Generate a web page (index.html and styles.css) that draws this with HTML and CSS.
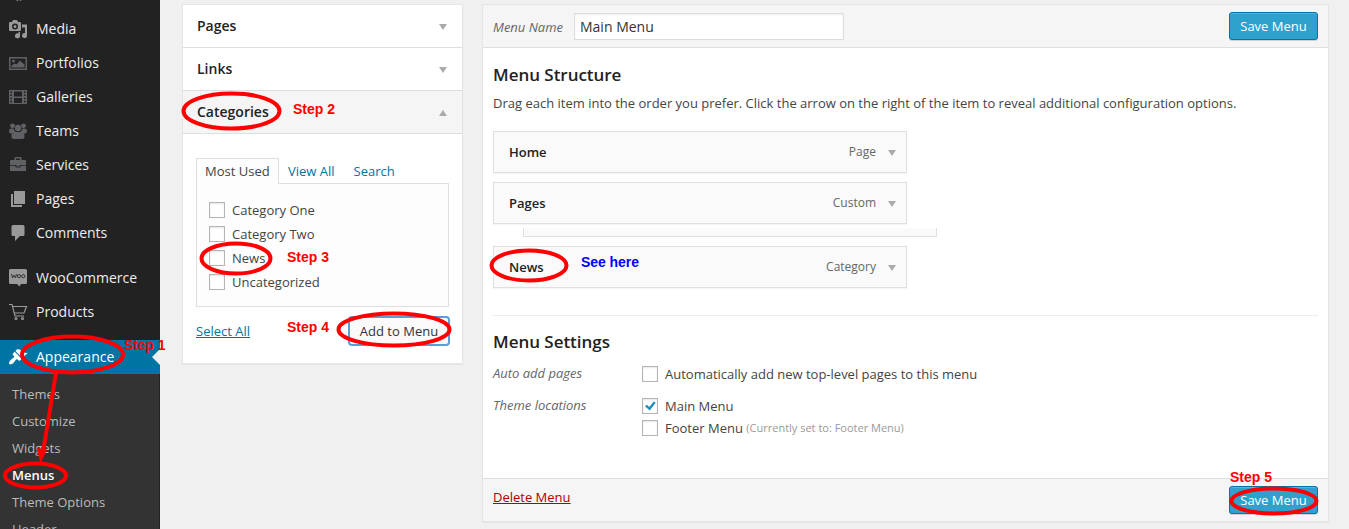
FILE: index.html
```html
<!DOCTYPE html>
<html lang="en">
<head>
<meta charset="utf-8">
<title>Menus</title>
<link rel="stylesheet" href="styles.css">
</head>
<body>
<div class="app">
  <nav class="sidebar">
    <div class="nav-cut"><svg viewBox="0 0 20 12"><path d="M8 -1l2 2M12.500 -1v2" stroke="#777" stroke-width="1.500"/></svg></div>
    <a class="nav-item"><svg class="icon light" viewBox="0 0 20 20"><path fill-rule="evenodd" d="M2 3h2l1-2h4l1 2h2q1 0 1 1v7q0 1-1 1H2q-1 0-1-1V4q0-1 1-1zM7 4.500a3 3 0 1 0 0 6a3 3 0 0 0 0-6zM7 6a1.500 1.500 0 1 1 0 3a1.500 1.500 0 0 1 0-3z"/><path d="M14 5.500h5v11a2.500 2.500 0 1 1-2-2.400V8.500h-3z"/><path d="M10.500 13H12v3.500a2.500 2.500 0 1 1-1.500-2z"/></svg><span>Media</span></a>
    <a class="nav-item"><svg class="icon dim" viewBox="0 0 20 20"><path fill-rule="evenodd" d="M1 4h18v13H1zM2.500 5.500v10h15v-10z"/><circle cx="5.500" cy="8" r="1.500"/><path d="M3.500 14.500v-2l3-2 2 1 3.500-4 2 2 2.500 2v3z"/></svg><span>Portfolios</span></a>
    <a class="nav-item"><svg class="icon dim" viewBox="0 0 20 20"><path fill-rule="evenodd" d="M1 3h18v14H1zM6 4.500v5h8v-5zM6 11v5h8v-5zM2.300 4.500v1.600h1.600V4.500zM2.300 7.500v1.600h1.600V7.500zM2.300 10.700v1.600h1.600v-1.600zM2.300 13.800v1.600h1.600v-1.600zM16 4.500v1.600h1.600V4.500zM16 7.500v1.600h1.600V7.500zM16 10.700v1.600h1.600v-1.600zM16 13.800v1.600h1.600v-1.600z"/></svg><span>Galleries</span></a>
    <a class="nav-item"><svg class="icon dim" viewBox="0 0 20 20"><circle cx="4.500" cy="4.800" r="2.400"/><circle cx="15.500" cy="4.800" r="2.400"/><circle cx="10" cy="7" r="3.200"/><path d="M1 10q0-2.500 2.500-2.500h2Q6 10 8 11l-2 1.500H2.500Q1 12 1 10zM19 10q0-2.500-2.500-2.500h-2Q14 10 12 11l2 1.500h3.500Q19 12 19 10z"/><path d="M3.500 15q0-4 4-4h5q4 0 4 4v1q0 2-2 2h-9q-2 0-2-2z"/></svg><span>Teams</span></a>
    <a class="nav-item"><svg class="icon dim" viewBox="0 0 20 20"><path fill-rule="evenodd" d="M6.500 5V3q0-1 1-1h5q1 0 1 1v2H17q1 0 1 1v4H2V6q0-1 1-1zM8 3.500V5h4V3.500z"/><path d="M2 10.800h5.500v1.700h5v-1.700H18V16H2z"/><path d="M8.500 10h3v1.500h-3z"/></svg><span>Services</span></a>
    <a class="nav-item"><svg class="icon light" viewBox="0 0 20 20"><path d="M6 2h11v13H6z"/><path d="M3 5h2v11h9v2H3z"/></svg><span>Pages</span></a>
    <a class="nav-item"><svg class="icon light" viewBox="0 0 20 20"><path d="M5 2h10q1.500 0 1.500 1.500v8q0 1.500-1.500 1.500h-3l-5 5v-5H5q-1.500 0-1.500-1.500v-8Q3.500 2 5 2z"/></svg><span>Comments</span></a>
    <a class="nav-item gap"><svg class="icon light" viewBox="0 0 20 20"><path d="M2.500 1h15Q19 1 19 2.500v12q0 1.500-1.500 1.500H13l-1.500 2.500L9 16H2.500Q1 16 1 14.500v-12Q1 1 2.500 1z"/><path d="M3.500 6l1 4L6 7l1.500 3 1-4" fill="none" stroke="#333" stroke-width="1"/><circle cx="11" cy="8.200" r="1.600" fill="none" stroke="#333"/><circle cx="15.300" cy="8.200" r="1.600" fill="none" stroke="#333"/></svg><span>WooCommerce</span></a>
    <a class="nav-item"><svg class="icon line" viewBox="0 0 20 20"><path d="M1 2.500h3l3 11.500h9M4.500 4.500h14l-2.500 6.500H6.500"/><circle cx="8" cy="16.500" r="1"/><circle cx="14.500" cy="16.500" r="1"/></svg><span>Products</span></a>
    <a class="nav-item gap current"><svg class="icon white" viewBox="0 0 20 20"><path d="M14.480 11.060L7.410 3.990l1.500-1.500c.5-.56 2.300-.47 3.510.32 1.210.8 1.430 1.280 2.910 2.100 1.180.64 2.450 1.260 4.450.85zM13.770 11.770L6.700 4.700 4.930 6.470c-.39.39-.39 1.020 0 1.410l1.060 1.060c.39.39.39 1.030 0 1.420-.6.600-1.430 1.110-2.210 1.690-.35.260-.7.530-1.010.840C1.430 14.230.4 16.080 1.400 17.070c.99 1 2.840-.03 4.180-1.360.31-.31.580-.66.850-1.020.57-.78 1.080-1.610 1.690-2.210.39-.39 1.020-.39 1.410 0l1.060 1.060c.39.390 1.020.39 1.410 0z"/></svg><span>Appearance</span><i class="notch"></i></a>
    <div class="submenu">
      <a>Themes</a><a>Customize</a><a>Widgets</a><a class="active">Menus</a><a>Theme Options</a><a>Header</a>
    </div>
  </nav>

  <aside class="accordion">
    <h3 class="acc-head">Pages<i class="arrow"></i></h3>
    <h3 class="acc-head">Links<i class="arrow"></i></h3>
    <h3 class="acc-head open">Categories<i class="arrow up"></i></h3>
    <div class="acc-body">
      <div class="tabs"><a class="tab selected">Most Used</a><a class="tab">View All</a><a class="tab">Search</a></div>
      <div class="tab-panel">
        <label class="check"><i class="box"></i>Category One</label>
        <label class="check"><i class="box"></i>Category Two</label>
        <label class="check"><i class="box"></i>News</label>
        <label class="check"><i class="box"></i>Uncategorized</label>
      </div>
      <div class="acc-actions"><a class="select-all">Select All</a><button class="btn-add">Add to Menu</button></div>
    </div>
  </aside>

  <main class="editor">
    <header class="bar">
      <span class="name-label">Menu Name</span><div class="name-input">Main Menu</div>
      <button class="btn-save">Save Menu</button>
    </header>
    <section class="content">
      <h2>Menu Structure</h2>
      <p class="hint">Drag each item into the order you prefer. Click the arrow on the right of the item to reveal additional configuration options.</p>
      <div class="item">Home<span class="type">Page</span><i class="arrow"></i></div>
      <div class="item">Pages<span class="type">Custom</span><i class="arrow"></i></div>
      <div class="item-sliver"></div>
      <div class="item">News<span class="type">Category</span><i class="arrow"></i></div>
      <hr>
      <h2>Menu Settings</h2>
      <div class="setting"><em>Auto add pages</em><div>
        <label class="check"><i class="box"></i>Automatically add new top-level pages to this menu</label></div></div>
      <div class="setting"><em>Theme locations</em><div>
        <label class="check"><i class="box"><svg viewBox="0 0 14 14"><path d="M2 7.300l2-1.500 2.200 2.200L10.800 2.500l1.900 1.200-6 7.800z"/></svg></i>Main Menu</label>
        <label class="check"><i class="box"></i>Footer Menu <small>(Currently set to: Footer Menu)</small></label></div></div>
    </section>
    <footer class="bar foot"><a class="delete">Delete Menu</a><button class="btn-save">Save Menu</button></footer>
  </main>

  <svg class="notes" viewBox="0 0 1349 529">
    <g class="ring">
      <ellipse cx="72.500" cy="354.500" rx="50.500" ry="18"/>
      <ellipse cx="35.500" cy="475.500" rx="30.500" ry="12"/>
      <ellipse cx="231.500" cy="111" rx="48" ry="17.500"/>
      <ellipse cx="236" cy="258.500" rx="34.500" ry="15"/>
      <ellipse cx="394" cy="329.500" rx="55.500" ry="16"/>
      <ellipse cx="529" cy="265.500" rx="37.500" ry="15"/>
      <ellipse cx="1274" cy="501" rx="42.500" ry="12.500"/>
      <path d="M56 373L43 452"/>
    </g>
    <path class="tip" d="M36.500 448l10.500 1.500-6.500 14z"/>
    <g class="step">
      <text x="124" y="350" textLength="41.500">Step 1</text>
      <text x="293" y="114" textLength="42">Step 2</text>
      <text x="287" y="262" textLength="42">Step 3</text>
      <text x="287" y="332" textLength="42">Step 4</text>
      <text x="1230" y="482" textLength="42">Step 5</text>
      <text class="see" x="581" y="267" textLength="58">See here</text>
    </g>
  </svg>
</div>
</body>
</html>
```
FILE: styles.css
```css
* { box-sizing: border-box; }
body { margin: 0; background: #f0f0f0; font: 13px/18px "Open Sans", sans-serif; color: #444; overflow: hidden; }
h2, h3, p { margin: 0; }
button { font-family: inherit; }

.app { position: relative; display: flex; align-items: flex-start; width: 1349px; height: 529px; overflow: hidden; }

/* Sidebar */
.sidebar { width: 160px; height: 529px; background: #222; overflow: hidden; flex: none; }
.nav-cut { height: 12px; padding-left: 8px; overflow: hidden; }
.nav-cut svg { display: block; width: 20px; height: 12px; }
.nav-item { display: flex; align-items: center; height: 34px; padding-left: 8px; gap: 8px; font-size: 14px; color: #eee; position: relative; }
.nav-item.gap { margin-top: 11px; }
.icon { width: 20px; height: 20px; flex: none; fill: #999; }
.icon.dim { fill: #606164; }
.icon.line { fill: none; stroke: #999; stroke-width: 1.2; }
.icon.white { fill: #fff; }
.nav-item.current { background: #0074a2; color: #fff; }
.notch { position: absolute; right: 0; top: 9px; border: 8px solid transparent; border-left: 0; border-right-color: #f0f0f0; }
.submenu { background: #333; padding-top: 7px; height: 160px; border-right: 1px solid #222; }
.submenu a { display: block; height: 27px; line-height: 27px; padding-left: 12px; color: #bbb; }
.submenu .active { color: #fff; font-weight: 600; }

/* Accordion */
.accordion { width: 281px; margin: 4px 0 0 22px; border: 1px solid #e5e5e5; background: #fff; flex: none; box-shadow: 0 1px 1px rgba(0,0,0,.04); }
.acc-head { height: 43px; padding: 0 15px 0 14px; display: flex; align-items: center; justify-content: space-between; font-size: 14px; font-weight: 600; color: #222; border-bottom: 1px solid #dfdfdf; }
.acc-head.open { background: #f5f5f5; }
.arrow { width: 0; height: 0; border: 4px solid transparent; border-top: 6px solid #aaa; border-bottom: 0; margin-top: 2px; }
.arrow.up { border-top: 0; border-bottom: 6px solid #aaa; }
.acc-body { padding: 24px 13px 17px; }
.tabs { display: flex; height: 25px; position: relative; margin-bottom: -1px; }
.tab { height: 26px; padding: 0 9px; line-height: 26px; color: #0074a2; }
.tab:last-child { padding-left: 10px; }
.tab.selected { width: 83px; padding: 0 8px; border: 1px solid #dfdfdf; border-bottom: 0; background: #fdfdfd; color: #444; line-height: 25px; z-index: 1; }
.tab-panel { height: 124px; margin-top: 1px; padding: 14px 12px; border: 1px solid #dfdfdf; background: #fdfdfd; }
.check { display: flex; align-items: center; height: 24px; white-space: pre; }
.box { width: 16px; height: 16px; margin-right: 7px; border: 1px solid #b4b4b4; background: #fff; box-shadow: inset 0 1px 2px rgba(0,0,0,.1); flex: none; }
.box svg { display: block; width: 14px; height: 14px; fill: #1e8cbe; }
.acc-actions { display: flex; justify-content: space-between; align-items: center; padding-top: 9px; }
.select-all { color: #0074a2; text-decoration: underline; }
.btn-add { width: 102px; height: 30px; padding: 0; border: 2px solid #5b9dd9; border-radius: 4px; background: #fafafa; color: #333; font-size: 13px; margin-right: -1px; }

/* Editor */
.editor { width: 847px; margin: 4px 0 0 19px; border: 1px solid #e5e5e5; background: #fff; flex: none; box-shadow: 0 1px 1px rgba(0,0,0,.04); }
.bar { height: 43px; padding: 0 10px; display: flex; align-items: center; background: #f5f5f5; border-bottom: 1px solid #dfdfdf; }
.foot { border-bottom: 0; border-top: 1px solid #dfdfdf; }
.name-label { width: 81px; font-style: italic; color: #666; padding-top: 2px; }
.name-input { width: 270px; height: 27px; padding-left: 5px; border: 1px solid #ddd; background: #fff; font-size: 14px; line-height: 25px; color: #333; box-shadow: inset 0 1px 2px rgba(0,0,0,.07); }
.btn-save { width: 89px; height: 28px; margin-left: auto; padding: 0; border: 1px solid #0074a2; border-radius: 3px; background: #2ea2cc; box-shadow: inset 0 1px 0 rgba(120,200,230,.5), 0 1px 0 rgba(0,0,0,.15); color: #fff; font-size: 13px; }
.content { height: 430px; padding: 16px 10px 0; }
h2 { font-size: 17px; line-height: 22px; font-weight: 600; color: #222; letter-spacing: -.03px; }
.hint { margin: 8px 0 19px; }
.item { width: 414px; height: 42px; margin-bottom: 9px; padding: 0 10px 0 15px; display: flex; align-items: center; border: 1px solid #dfdfdf; background: #fafafa; color: #222; font-weight: 600; box-shadow: 0 1px 1px rgba(0,0,0,.04); }
.type { margin-left: auto; margin-right: 12px; font-size: 12px; font-weight: 400; color: #666; }
.item-sliver { width: 414px; height: 9px; margin: -5px 0 9px 30px; border: 1px solid #dfdfdf; border-top: 0; background: #fafafa; }
hr { margin: 27px 0 15px; border: 0; border-top: 1px solid #eee; }
.setting { display: flex; margin-top: 10px; }
.setting em { width: 149px; color: #666; line-height: 20px; }
.setting .check { height: 22px; }
small { font-size: 11px; color: #999; }
.delete { color: #a00; text-decoration: underline; margin-top: -6px; }

/* Annotations */
.notes { position: absolute; left: 0; top: 0; width: 1349px; height: 529px; pointer-events: none; }
.ring { fill: none; stroke: #f00; stroke-width: 4; }
.tip { fill: #f00; }
.step { font: bold 14px "Liberation Sans", Arial, sans-serif; fill: #f00; }
.see { fill: #00f; }
```
